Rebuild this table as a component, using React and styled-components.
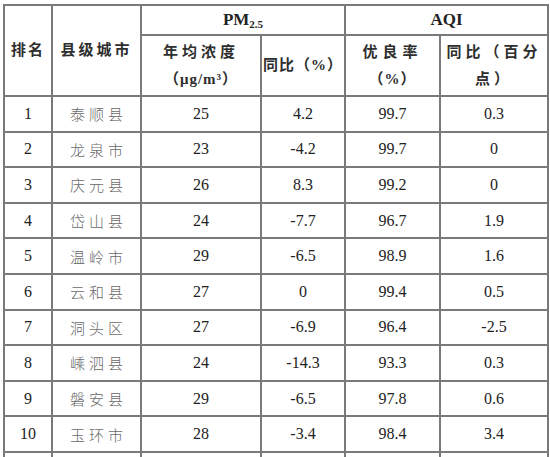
import React from "react";
import styled, { createGlobalStyle } from "styled-components";

const GlobalStyle = createGlobalStyle`
  html, body {
    margin: 0;
    padding: 0;
    background: #fff;
    overflow: hidden;
  }
  body {
    font-family: "Liberation Serif", "Noto Sans CJK SC", serif;
  }
`;

const Page = styled.div`
  width: 550px;
  height: 457px;
  overflow: hidden;
  padding: 4px 0 0 3px;
  box-sizing: border-box;
`;

const Table = styled.table`
  border-collapse: collapse;
  table-layout: fixed;
  width: 544px;
`;

const Cell = styled.td`
  border: 2px solid #7a7a7a;
  text-align: center;
  vertical-align: middle;
  padding: 0;
  height: ${props => props.h || "35.6px"};
  box-sizing: border-box;
`;

const HeadCell = styled(Cell).attrs({ as: "th" })`
  font-weight: bold;
`;

const HeadCn = styled.div`
  font-family: "Liberation Serif", "Noto Sans CJK SC", sans-serif;
  font-weight: bold;
  font-size: 15px;
  color: #2e2e2e;
  letter-spacing: ${props => props.spacing || "3px"};
  line-height: 27px;
`;

const HeadEn = styled.div`
  font-family: "Liberation Serif", serif;
  font-weight: bold;
  font-size: 17px;
  color: #222;
  & sub {
    font-size: 11px;
    vertical-align: -3px;
  }
`;

const Num = styled.span`
  font-family: "Liberation Serif", serif;
  font-size: 16px;
  color: #222;
`;

const City = styled.span`
  font-family: "Noto Sans CJK SC", sans-serif;
  font-size: 15px;
  font-weight: 300;
  color: #6a6a6a;
  letter-spacing: 4px;
  margin-right: -4px;
`;

const rows = [
  [1, "泰顺县", 25, "4.2", "99.7", "0.3"],
  [2, "龙泉市", 23, "-4.2", "99.7", "0"],
  [3, "庆元县", 26, "8.3", "99.2", "0"],
  [4, "岱山县", 24, "-7.7", "96.7", "1.9"],
  [5, "温岭市", 29, "-6.5", "98.9", "1.6"],
  [6, "云和县", 27, "0", "99.4", "0.5"],
  [7, "洞头区", 27, "-6.9", "96.4", "-2.5"],
  [8, "嵊泗县", 24, "-14.3", "93.3", "0.3"],
  [9, "磐安县", 29, "-6.5", "97.8", "0.6"],
  [10, "玉环市", 28, "-3.4", "98.4", "3.4"],
];

export default function App() {
  return (
    <>
      <GlobalStyle />
      <Page>
        <Table>
          <colgroup>
            <col style={{ width: 48 }} />
            <col style={{ width: 89 }} />
            <col style={{ width: 120 }} />
            <col style={{ width: 84 }} />
            <col style={{ width: 95 }} />
            <col style={{ width: 108 }} />
          </colgroup>
          <thead>
            <tr>
              <HeadCell rowSpan={2} h="30px">
                <HeadCn spacing="2px">排名</HeadCn>
              </HeadCell>
              <HeadCell rowSpan={2} h="30px">
                <HeadCn spacing="3px">县级城市</HeadCn>
              </HeadCell>
              <HeadCell colSpan={2} h="30px">
                <HeadEn>
                  PM<sub>2.5</sub>
                </HeadEn>
              </HeadCell>
              <HeadCell colSpan={2} h="30px">
                <HeadEn>AQI</HeadEn>
              </HeadCell>
            </tr>
            <tr>
              <HeadCell h="61px">
                <HeadCn spacing="4px">年均浓度</HeadCn>
                <HeadCn spacing="1px">（μg/m³）</HeadCn>
              </HeadCell>
              <HeadCell h="61px">
                <HeadCn spacing="1px">同比（%）</HeadCn>
              </HeadCell>
              <HeadCell h="61px">
                <HeadCn spacing="5px">优良率</HeadCn>
                <HeadCn spacing="1px">（%）</HeadCn>
              </HeadCell>
              <HeadCell h="61px">
                <HeadCn spacing="4px">同比（百分</HeadCn>
                <HeadCn spacing="4px">点）</HeadCn>
              </HeadCell>
            </tr>
          </thead>
          <tbody>
            {rows.map(r => (
              <tr key={r[0]}>
                <Cell><Num>{r[0]}</Num></Cell>
                <Cell><City>{r[1]}</City></Cell>
                <Cell><Num>{r[2]}</Num></Cell>
                <Cell><Num>{r[3]}</Num></Cell>
                <Cell><Num>{r[4]}</Num></Cell>
                <Cell><Num>{r[5]}</Num></Cell>
              </tr>
            ))}
            <tr>
              <Cell /><Cell /><Cell /><Cell /><Cell /><Cell />
            </tr>
          </tbody>
        </Table>
      </Page>
    </>
  );
}
